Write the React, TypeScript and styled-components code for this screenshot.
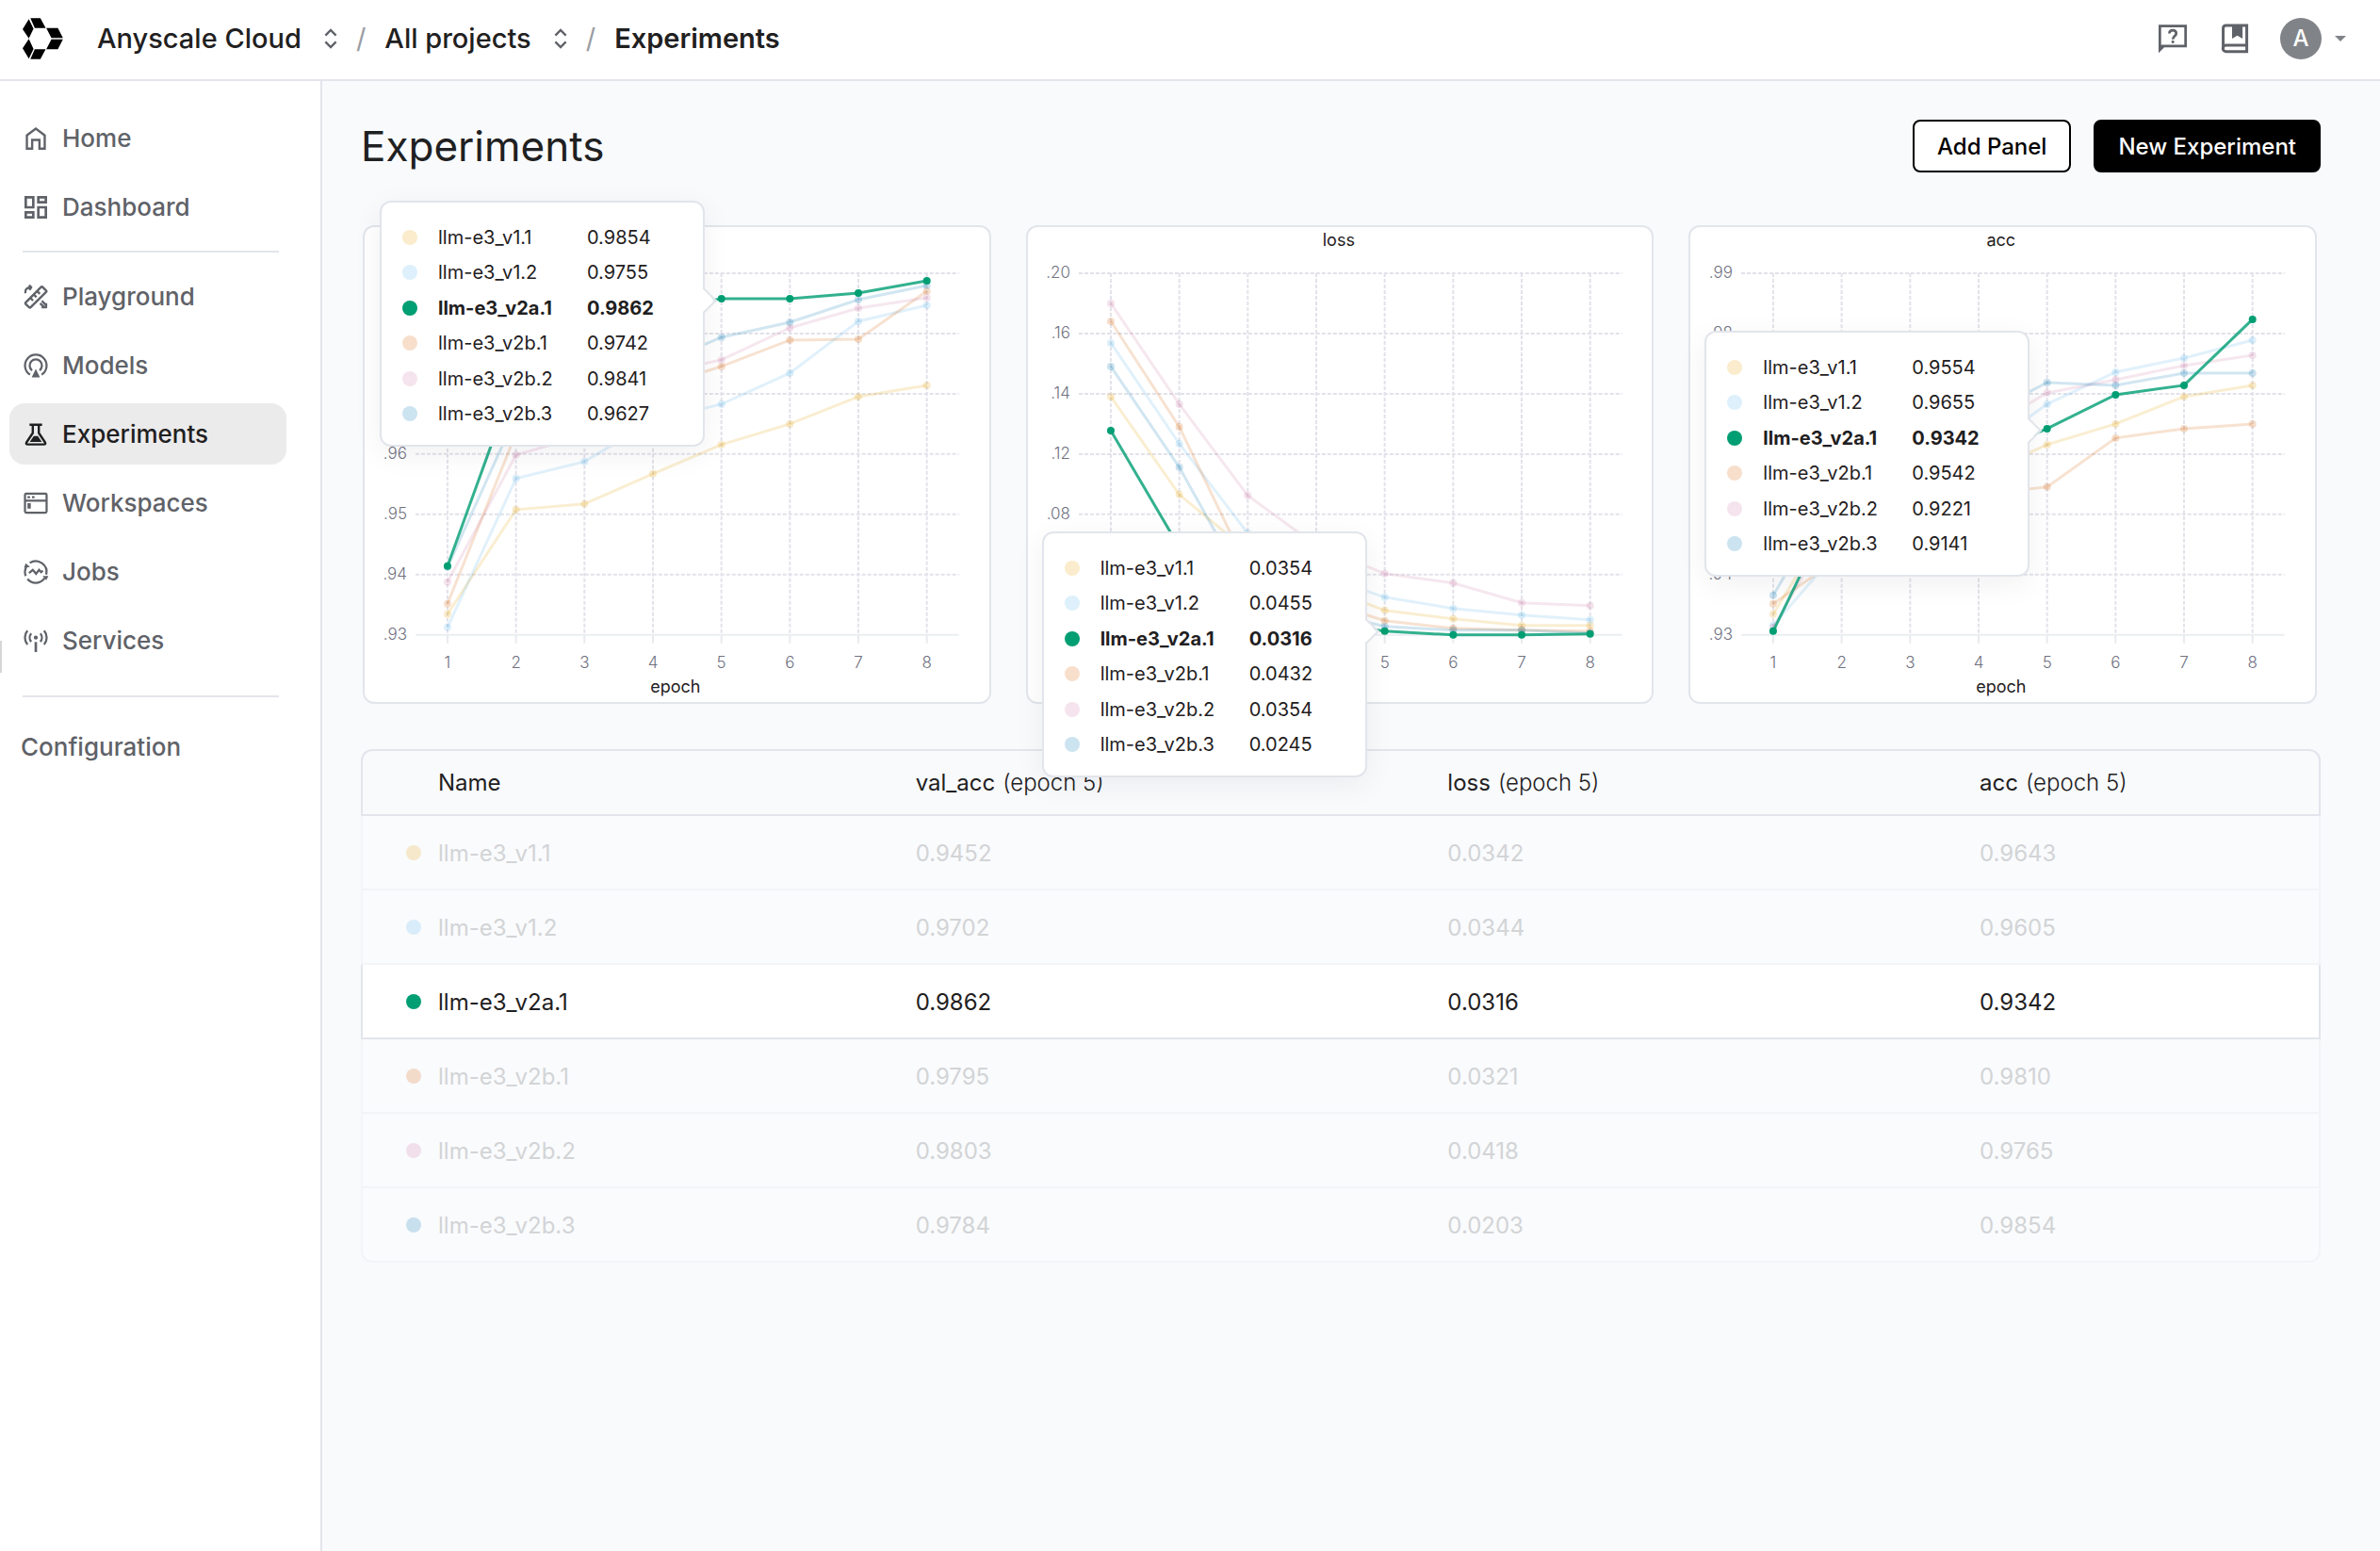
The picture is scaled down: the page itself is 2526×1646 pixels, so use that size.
import React from "react";
import styled, { createGlobalStyle } from "styled-components";

const color = {
  text: "#1f2021",
  muted: "#5f6268",
  faded: "#d2d4d6",
  axis: "#70717f",
  canvas: "#f8fafc",
  line: "#e2e5eb",
  faintLine: "#f2f4f7",
};

const GlobalStyle = createGlobalStyle`
  *, *::before, *::after { box-sizing: border-box; }
  body {
    margin: 0;
    background: ${color.canvas};
    color: ${color.text};
    font-family: Inter, "Liberation Sans", sans-serif;
    font-size: 24px;
  }
  button { font: inherit; color: inherit; cursor: pointer; }
`;

/* ---------- data ---------- */

type SeriesId = "v11" | "v12" | "v2a1" | "v2b1" | "v2b2" | "v2b3";

const series: { id: SeriesId; name: string; hue: string; row: string[] }[] = [
  { id: "v11", name: "llm-e3_v1.1", hue: "#e69f00", row: ["0.9452", "0.0342", "0.9643"] },
  { id: "v12", name: "llm-e3_v1.2", hue: "#56b4e9", row: ["0.9702", "0.0344", "0.9605"] },
  { id: "v2a1", name: "llm-e3_v2a.1", hue: "#009e73", row: ["0.9862", "0.0316", "0.9342"] },
  { id: "v2b1", name: "llm-e3_v2b.1", hue: "#d55e00", row: ["0.9795", "0.0321", "0.9810"] },
  { id: "v2b2", name: "llm-e3_v2b.2", hue: "#cc79a7", row: ["0.9803", "0.0418", "0.9765"] },
  { id: "v2b3", name: "llm-e3_v2b.3", hue: "#0072b2", row: ["0.9784", "0.0203", "0.9854"] },
];

const selected: SeriesId = "v2a1";
const metrics = ["val_acc", "loss", "acc"];

interface ChartData {
  label: string;
  title?: string;
  ticks: string[];
  /* epochs that the open tooltip leaves uncovered on the x axis */
  epochs: number[];
  tooltip: { left: number; top: number; values: string[] };
  points: Record<SeriesId, number[]>;
}

const charts: ChartData[] = [
  {
    label: "val_acc",
    ticks: [".99", ".98", ".97", ".96", ".95", ".94", ".93"],
    epochs: [1, 2, 3, 4, 5, 6, 7, 8],
    tooltip: {
      left: 16,
      top: -28,
      values: ["0.9854", "0.9755", "0.9862", "0.9742", "0.9841", "0.9627"],
    },
    points: {
      v11: [411, 300, 294, 262, 231, 209, 180, 168],
      v12: [425, 267, 249, 206, 188, 155, 100, 83],
      v2a1: [360, 159, 119, 89, 76, 76, 70, 57],
      v2b1: [400, 219, 193, 171, 148, 120, 119, 68],
      v2b2: [377, 242, 221, 157, 141, 107, 86, 75],
      v2b3: [361, 200, 171, 148, 117, 101, 77, 62],
    },
  },
  {
    label: "loss",
    title: "loss",
    ticks: [".20", ".16", ".14", ".12", ".08", ".04", ".00"],
    epochs: [5, 6, 7, 8],
    tooltip: {
      left: 15,
      top: 323,
      values: ["0.0354", "0.0455", "0.0316", "0.0432", "0.0354", "0.0245"],
    },
    points: {
      v11: [180, 284, 344, 379, 407, 416, 423, 423],
      v12: [123, 230, 325, 368, 393, 405, 412, 417],
      v2a1: [216, 340, 399, 419, 429, 433, 433, 432],
      v2b1: [100, 212, 363, 395, 418, 426, 428, 429],
      v2b2: [81, 188, 285, 338, 368, 378, 399, 402],
      v2b3: [148, 255, 386, 407, 424, 428, 428, 431],
    },
  },
  {
    label: "acc",
    title: "acc",
    ticks: [".99", ".98", ".97", ".96", ".95", ".94", ".93"],
    epochs: [1, 2, 3, 4, 5, 6, 7, 8],
    tooltip: {
      left: 15,
      top: 110,
      values: ["0.9554", "0.9655", "0.9342", "0.9542", "0.9221", "0.9141"],
    },
    points: {
      v11: [411, 292, 281, 264, 231, 209, 180, 168],
      v12: [423, 339, 290, 240, 188, 154, 139, 120],
      v2a1: [429, 279, 260, 245, 214, 178, 168, 98],
      v2b1: [400, 350, 300, 284, 276, 224, 214, 209],
      v2b2: [425, 300, 250, 219, 176, 162, 147, 136],
      v2b3: [391, 268, 230, 203, 165, 168, 155, 155],
    },
  },
];

/* ---------- icons ---------- */

const Glyph = styled.svg<{ $size: number }>`
  display: block;
  flex: none;
  width: ${(p) => p.$size}px;
  height: ${(p) => p.$size}px;
`;

const stroke = { fill: "none", stroke: "currentColor" } as const;

const HomeIcon = () => (
  <Glyph $size={32} viewBox="0 0 24 24" aria-hidden="true">
    <path
      fill="currentColor"
      fillRule="evenodd"
      d="M4 21V9l8-6 8 6v12h-6v-7h-4v7H4zM5.8 19.2h2.4v-7h7.6v7h2.4V9.9L12 5.2 5.8 9.9z"
    />
  </Glyph>
);

const DashboardIcon = () => (
  <Glyph $size={32} viewBox="0 0 24 24" aria-hidden="true">
    <g {...stroke} strokeWidth="2">
      <path d="M4 4h6v8H4zM14 4h6v4h-6zM14 12h6v8h-6zM4 16h6v4H4z" />
    </g>
  </Glyph>
);

const PlaygroundIcon = () => (
  <Glyph $size={32} viewBox="0 0 24 24" aria-hidden="true">
    <g {...stroke} strokeWidth="1.8" strokeLinejoin="round">
      <path d="M3.9 16.6 16.2 4.2q.6-.6 1.2 0l2.8 2.8q.6.6 0 1.2L7.9 20.4q-.6.6-1.2 0L3.9 17.8q-.5-.6 0-1.2z" />
      <path d="m7.8 13 2 2M10.5 10.3l2 2M13.2 7.6l2 2" />
      <path d="M3.7 9.2C3.2 6.4 4.6 4.5 8.4 4.4M6.6 2.8 8.4 4.4 6.9 6.6" />
      <path d="M16.8 15.2 20.2 18.6V20.2H18.6L15.4 17.2M20.2 17V20.2H16.6" />
    </g>
  </Glyph>
);

const ModelsIcon = () => (
  <Glyph $size={32} viewBox="0 0 24 24" aria-hidden="true">
    <g {...stroke} strokeWidth="1.7">
      <path d="M7.4 19.2A8.6 8.6 0 1 1 16.6 19.2" />
      <path d="M9 15.8A4.9 4.9 0 1 1 15 15.8" />
    </g>
    <path fill="currentColor" d="M12 14.6 15.3 21.4H8.7z" />
  </Glyph>
);

const ExperimentsIcon = () => (
  <Glyph $size={32} viewBox="0 0 24 24" aria-hidden="true">
    <g {...stroke} strokeWidth="1.8" strokeLinejoin="round">
      <path d="M7 4.3h10M9.6 4.3v6.6L4.6 18.4q-.8 1.6 1 1.6h12.8q1.8 0 1-1.6l-5-7.5V4.3" />
    </g>
    <path fill="currentColor" d="M10.4 13.4h3.2l3.2 4.6H7.2z" />
  </Glyph>
);

const WorkspacesIcon = () => (
  <Glyph $size={32} viewBox="0 0 24 24" aria-hidden="true">
    <g {...stroke} strokeWidth="1.7">
      <rect x="3.4" y="4.4" width="17.2" height="15.2" rx="1" />
      <path d="M3.4 10h17.2" />
    </g>
    <path fill="currentColor" d="M5.4 6.4h2v1.7h-2zM9 6.4h2v1.7H9zM5.4 12h2.6v4.4H5.4z" />
  </Glyph>
);

const JobsIcon = () => (
  <Glyph $size={32} viewBox="0 0 24 24" aria-hidden="true">
    <g {...stroke} strokeWidth="1.7">
      <path d="M4 15.2A8.6 8.6 0 0 1 4.4 8M7.2 4.8A8.6 8.6 0 0 1 20.3 14" />
      <path d="M19 17A8.6 8.6 0 0 1 5.4 17.6" />
      <path d="m6.6 12.8 3-2.4 2.6 3 2.4-3 1.6 1.8 1.4-1.2" />
    </g>
    <path fill="currentColor" d="M2.6 8.6 7.4 8 4 5zM17.4 15.2h4.6l-1.6 3.4z" />
  </Glyph>
);

const ServicesIcon = () => (
  <Glyph $size={32} viewBox="0 0 24 24" aria-hidden="true">
    <g {...stroke} strokeWidth="1.7">
      <path d="M5.4 4A8.4 8.4 0 0 0 5.4 15M18.6 4A8.4 8.4 0 0 1 18.6 15M8.4 6.2A5 5 0 0 0 8.4 12.8M15.6 6.2A5 5 0 0 1 15.6 12.8" />
      <path d="M12 13v8" strokeWidth="2" />
    </g>
    <circle cx="12" cy="9.5" r="1.6" fill="currentColor" />
  </Glyph>
);

const FeedbackIcon = () => (
  <Glyph $size={36} viewBox="0 0 24 24" aria-hidden="true">
    <path
      fill="currentColor"
      fillRule="evenodd"
      d="M2 2.2h20v16H6l-4 4zM3.8 4v12.4h16.4V4z"
    />
    <path {...stroke} strokeWidth="1.8" d="M9.6 8.3c0-3 4.9-3 4.9 0 0 1.9-2.4 2-2.4 4.2" />
    <path fill="currentColor" d="M11.2 13.4H13v1.8h-1.8z" />
  </Glyph>
);

const DocsIcon = () => (
  <Glyph $size={36} viewBox="0 0 24 24" aria-hidden="true">
    <g {...stroke} strokeWidth="2">
      <path d="M3.7 19V4.6q0-2 2-2H20.4v14H5.8a2.1 2.1 0 0 0 0 4.6H20.4V16" />
    </g>
    <path fill="currentColor" d="M10 2.6h7.4V12l-3.7-2.2L10 12z" />
  </Glyph>
);

const LogoSvg = styled.svg`
  display: block;
  width: 43px;
  height: 44px;
`;

const Logo = () => (
  <LogoSvg viewBox="42 40 130 132" role="img" aria-label="Anyscale">
    <path d="M62 43 42 76 62 105 77 74zM67 40H99L116 72H81z" />
    <path d="M62 107 42 137 62 170 77 139zM67 172H99L116 140H81z" />
    <path d="M118 72H155L171 103H134zM118 140H155L171 109H134z" />
    <path d="M134 106H171" stroke="#777" strokeWidth="3" />
  </LogoSvg>
);

const UpDown = styled.svg`
  display: block;
  width: 14px;
  height: 22px;
`;

/* ---------- top bar ---------- */

const TopBar = styled.header`
  display: flex;
  align-items: center;
  justify-content: space-between;
  height: 86px;
  padding: 0 36px 2px 24px;
  background: #fff;
  border-bottom: 2px solid ${color.line};
`;

const Crumbs = styled.nav`
  display: flex;
  align-items: center;
  gap: 20px;
  font-size: 29px;
  font-weight: 500;
  line-height: 36px;
`;

const HomeLink = styled.a`
  margin-right: 16px;
`;

const Picker = styled.button`
  display: flex;
  align-items: center;
  gap: 24px;
  padding: 0;
  border: 0;
  background: none;

  svg {
    color: ${color.muted};
  }
`;

const Slash = styled.span`
  color: #9a9da3;
  font-weight: 400;
`;

const CurrentPage = styled.span`
  font-weight: 600;
`;

const Tools = styled.div`
  display: flex;
  align-items: center;
  gap: 30px;
`;

const IconButton = styled.button`
  padding: 0;
  border: 0;
  background: none;
  color: ${color.muted};
`;

const Account = styled.button`
  display: flex;
  align-items: center;
  gap: 14px;
  padding: 0;
  border: 0;
  background: none;
`;

const Avatar = styled.span`
  width: 44px;
  height: 44px;
  border-radius: 50%;
  background: #808388;
  color: #fff;
  font-size: 24px;
  font-weight: 500;
  line-height: 44px;
  text-align: center;
`;

const Caret = styled.span`
  border: 6px solid transparent;
  border-top-color: #808388;
  border-bottom-width: 0;
`;

/* ---------- side bar ---------- */

const Body = styled.div`
  display: flex;
  min-height: calc(100vh - 86px);
`;

const Side = styled.aside`
  position: relative;
  flex: none;
  width: 342px;
  padding: 28px 0;
  background: #fff;
  border-right: 2px solid ${color.line};
`;

const SideHandle = styled.span`
  position: absolute;
  left: 0;
  top: 594px;
  width: 2px;
  height: 34px;
  background: #d6d6d6;
`;

const NavList = styled.ul`
  display: grid;
  gap: 8px;
  margin: 0 36px 0 10px;
  padding: 0;
  list-style: none;
`;

const NavLink = styled.a<{ $active?: boolean }>`
  display: flex;
  align-items: center;
  gap: 12px;
  height: 65px;
  padding: 0 12px;
  border-radius: 16px;
  background: ${(p) => (p.$active ? "#ebebeb" : "transparent")};
  color: ${(p) => (p.$active ? color.text : color.muted)};
  font-size: 26px;
  font-weight: 500;
  text-decoration: none;
`;

const Divider = styled.hr<{ $above: number; $below: number }>`
  height: 2px;
  margin: ${(p) => p.$above}px 44px ${(p) => p.$below}px 24px;
  border: 0;
  background: ${color.line};
`;

/* ---------- main ---------- */

const Main = styled.main`
  flex: 1;
  min-width: 0;
  padding: 41px 63px 64px 41px;
`;

const TitleRow = styled.div`
  display: flex;
  align-items: center;
  justify-content: space-between;
  margin-bottom: 56px;
`;

const Title = styled.h1`
  margin: 0;
  font-size: 44px;
  font-weight: 400;
  line-height: 56px;
`;

const Actions = styled.div`
  display: flex;
  gap: 24px;
`;

const Action = styled.button<{ $primary?: boolean }>`
  height: 56px;
  padding: 0 24px;
  border: 2px solid #000;
  border-radius: 8px;
  background: ${(p) => (p.$primary ? "#000" : "#fff")};
  color: ${(p) => (p.$primary ? "#fff" : "#000")};
  font-weight: 500;
`;

const Panels = styled.section`
  display: grid;
  grid-template-columns: repeat(3, minmax(0, 1fr));
  gap: 37px;
  margin-bottom: 48px;
  padding: 0 4px 0 2px;
`;

const Panel = styled.article`
  position: relative;
  border: 2px solid ${color.line};
  border-radius: 12px;
  background: #fff;
`;

const Plot = styled.svg`
  display: block;
  width: 100%;
  height: auto;
  font-size: 18px;
`;

const Tick = styled.text`
  fill: ${color.axis};
  font-size: 17px;
  font-weight: 300;
`;

const Caption = styled.text`
  fill: ${color.text};
`;

const Tip = styled.div<{ $left: number; $top: number }>`
  position: absolute;
  z-index: 2;
  left: ${(p) => p.$left}px;
  top: ${(p) => p.$top}px;
  width: 345px;
  border: 2px solid ${color.line};
  border-radius: 12px;
  background: #fff;
  box-shadow: 0 8px 32px rgba(20, 20, 30, 0.06);

  &::after {
    content: "";
    position: absolute;
    left: 332px;
    top: 94px;
    width: 20px;
    height: 20px;
    border: solid ${color.line};
    border-width: 2px 2px 0 0;
    background: linear-gradient(45deg, transparent 50%, #fff 50%);
    transform: rotate(45deg);
  }
`;

const TipList = styled.ul`
  display: grid;
  grid-template-rows: repeat(6, 1fr);
  height: 257px;
  margin: 0;
  padding: 18px 22px 14px;
  list-style: none;
  font-size: 20px;
`;

const TipRow = styled.li<{ $strong: boolean }>`
  display: grid;
  grid-template-columns: 38px 158px auto;
  align-items: center;
  font-weight: ${(p) => (p.$strong ? 700 : 400)};
`;

const Dot = styled.span<{ $hue: string; $strong: boolean }>`
  flex: none;
  width: 16px;
  height: 16px;
  border-radius: 50%;
  background: ${(p) => p.$hue};
  opacity: ${(p) => (p.$strong ? 1 : 0.2)};
`;

/* ---------- results table ---------- */

const Table = styled.table`
  width: 100%;
  table-layout: fixed;
  border-collapse: separate;
  border-spacing: 0;
  text-align: left;
`;

const Column = styled.col<{ $width?: string }>`
  width: ${(p) => p.$width ?? "auto"};
`;

const HeadCell = styled.th`
  height: 71px;
  padding: 0;
  border: solid ${color.line};
  border-width: 2px 0;
  font-weight: 400;

  &:first-child {
    padding-left: 80px;
    border-left-width: 2px;
    border-top-left-radius: 12px;
  }
  &:last-child {
    border-right-width: 2px;
    border-top-right-radius: 12px;
  }
`;

const Epoch = styled.span`
  margin-left: 8px;
  font-weight: 300;
`;

const Row = styled.tr<{ $strong: boolean }>`
  background: ${(p) => (p.$strong ? "#fff" : "#fafbfd")};
  color: ${(p) => (p.$strong ? color.text : color.faded)};

  td {
    height: 79px;
    padding: 2px 0 0;
    border: solid ${(p) => (p.$strong ? color.line : color.faintLine)};
    border-width: 0 0 2px;
  }
  td:first-child {
    padding-left: 46px;
    border-left-width: 2px;
  }
  td:last-child {
    border-right-width: 2px;
  }
  &:last-child td:first-child {
    border-bottom-left-radius: 12px;
  }
  &:last-child td:last-child {
    border-bottom-right-radius: 12px;
  }
`;

const NameCell = styled.div`
  display: flex;
  align-items: center;
  gap: 18px;
`;

/* ---------- components ---------- */

const UpDownIcon = () => (
  <UpDown viewBox="0 0 14 22" aria-hidden="true">
    <path {...stroke} strokeWidth="2.4" d="M1.4 7.6 7 2l5.6 5.6M1.4 14.4 7 20l5.6-5.6" />
  </UpDown>
);

const epochX = (i: number) => 88 + (i * 509) / 7;
const tickY = (i: number) => 49 + i * 64;

function Chart({ data }: { data: ChartData }) {
  return (
    <Panel>
      <Plot viewBox="0 0 663 504" role="img" aria-label={`${data.label} by epoch`}>
        {data.title && (
          <Caption x="330" y="20" textAnchor="middle">
            {data.title}
          </Caption>
        )}
        <g stroke="#e2e2ea" strokeWidth="2">
          {data.ticks.map((t, i) =>
            i < 6 ? (
              <line key={t} x1="54" x2="631" y1={tickY(i)} y2={tickY(i)} strokeDasharray="4 2" />
            ) : (
              <line key={t} x1="54" x2="631" y1={tickY(i)} y2={tickY(i)} stroke="#ebeff2" />
            )
          )}
          {data.points.v11.map((_, i) => (
            <React.Fragment key={i}>
              <line x1={epochX(i)} x2={epochX(i)} y1="49" y2="433" strokeDasharray="4 2" />
              <line x1={epochX(i)} x2={epochX(i)} y1="433" y2="442" stroke="#e8eaef" />
            </React.Fragment>
          ))}
        </g>
        {data.ticks.map((t, i) => (
          <Tick key={t} x="45" y={tickY(i) + 5} textAnchor="end">
            {t}
          </Tick>
        ))}
        {data.epochs.map((n) => (
          <Tick key={n} x={epochX(n - 1)} y="468" textAnchor="middle">
            {n}
          </Tick>
        ))}
        <Caption x="330" y="494" textAnchor="middle">
          epoch
        </Caption>
        {[...series]
          .sort((a, b) => Number(a.id === selected) - Number(b.id === selected))
          .map((s) => {
            const strong = s.id === selected;
            const ys = data.points[s.id];
            return (
              <g key={s.id}>
                <polyline
                  fill="none"
                  stroke={s.hue}
                  strokeWidth="3"
                  opacity={strong ? 0.8 : 0.18}
                  points={ys.map((y, i) => `${epochX(i)},${y}`).join(" ")}
                />
                <g fill={s.hue} opacity={strong ? 1 : 0.2}>
                  {ys.map((y, i) => (
                    <circle key={i} cx={epochX(i)} cy={y} r="4" />
                  ))}
                </g>
              </g>
            );
          })}
      </Plot>
      <Tip role="tooltip" $left={data.tooltip.left} $top={data.tooltip.top}>
        <TipList>
          {series.map((s, i) => (
            <TipRow key={s.id} $strong={s.id === selected}>
              <Dot $hue={s.hue} $strong={s.id === selected} />
              <span>{s.name}</span>
              <span>{data.tooltip.values[i]}</span>
            </TipRow>
          ))}
        </TipList>
      </Tip>
    </Panel>
  );
}

const mainLinks = [
  { name: "Home", icon: <HomeIcon /> },
  { name: "Dashboard", icon: <DashboardIcon /> },
];

const workLinks = [
  { name: "Playground", icon: <PlaygroundIcon /> },
  { name: "Models", icon: <ModelsIcon /> },
  { name: "Experiments", icon: <ExperimentsIcon /> },
  { name: "Workspaces", icon: <WorkspacesIcon /> },
  { name: "Jobs", icon: <JobsIcon /> },
  { name: "Services", icon: <ServicesIcon /> },
];

function NavItems({ links }: { links: { name: string; icon: React.ReactNode }[] }) {
  return (
    <NavList>
      {links.map((l) => (
        <li key={l.name}>
          <NavLink
            href={`#${l.name.toLowerCase()}`}
            $active={l.name === "Experiments"}
            aria-current={l.name === "Experiments" ? "page" : undefined}
          >
            {l.icon}
            {l.name}
          </NavLink>
        </li>
      ))}
    </NavList>
  );
}

export default function App() {
  return (
    <>
      <GlobalStyle />
      <TopBar>
        <Crumbs aria-label="Breadcrumb">
          <HomeLink href="#home" aria-label="Anyscale home">
            <Logo />
          </HomeLink>
          <Picker type="button">
            Anyscale Cloud
            <UpDownIcon />
          </Picker>
          <Slash>/</Slash>
          <Picker type="button">
            All projects
            <UpDownIcon />
          </Picker>
          <Slash>/</Slash>
          <CurrentPage>Experiments</CurrentPage>
        </Crumbs>
        <Tools>
          <IconButton type="button" aria-label="Help and feedback">
            <FeedbackIcon />
          </IconButton>
          <IconButton type="button" aria-label="Documentation">
            <DocsIcon />
          </IconButton>
          <Account type="button" aria-label="Account">
            <Avatar>A</Avatar>
            <Caret />
          </Account>
        </Tools>
      </TopBar>
      <Body>
        <Side>
          <SideHandle />
          <nav aria-label="Main">
            <NavItems links={mainLinks} />
            <Divider $above={14} $below={14} />
            <NavItems links={workLinks} />
            <Divider $above={26} $below={20} />
            <NavList>
              <li>
                <NavLink href="#configuration">Configuration</NavLink>
              </li>
            </NavList>
          </nav>
        </Side>
        <Main>
          <TitleRow>
            <Title>Experiments</Title>
            <Actions>
              <Action type="button">Add Panel</Action>
              <Action type="button" $primary>
                New Experiment
              </Action>
            </Actions>
          </TitleRow>
          <Panels>
            {charts.map((c) => (
              <Chart key={c.label} data={c} />
            ))}
          </Panels>
          <Table>
            <colgroup>
              <Column $width="28.3%" />
              <Column $width="27.15%" />
              <Column $width="27.15%" />
              <Column />
            </colgroup>
            <thead>
              <tr>
                <HeadCell scope="col">Name</HeadCell>
                {metrics.map((m) => (
                  <HeadCell scope="col" key={m}>
                    {m}
                    <Epoch>(epoch 5)</Epoch>
                  </HeadCell>
                ))}
              </tr>
            </thead>
            <tbody>
              {series.map((s) => (
                <Row key={s.id} $strong={s.id === selected}>
                  <td>
                    <NameCell>
                      <Dot $hue={s.hue} $strong={s.id === selected} />
                      {s.name}
                    </NameCell>
                  </td>
                  {s.row.map((v, i) => (
                    <td key={i}>{v}</td>
                  ))}
                </Row>
              ))}
            </tbody>
          </Table>
        </Main>
      </Body>
    </>
  );
}
